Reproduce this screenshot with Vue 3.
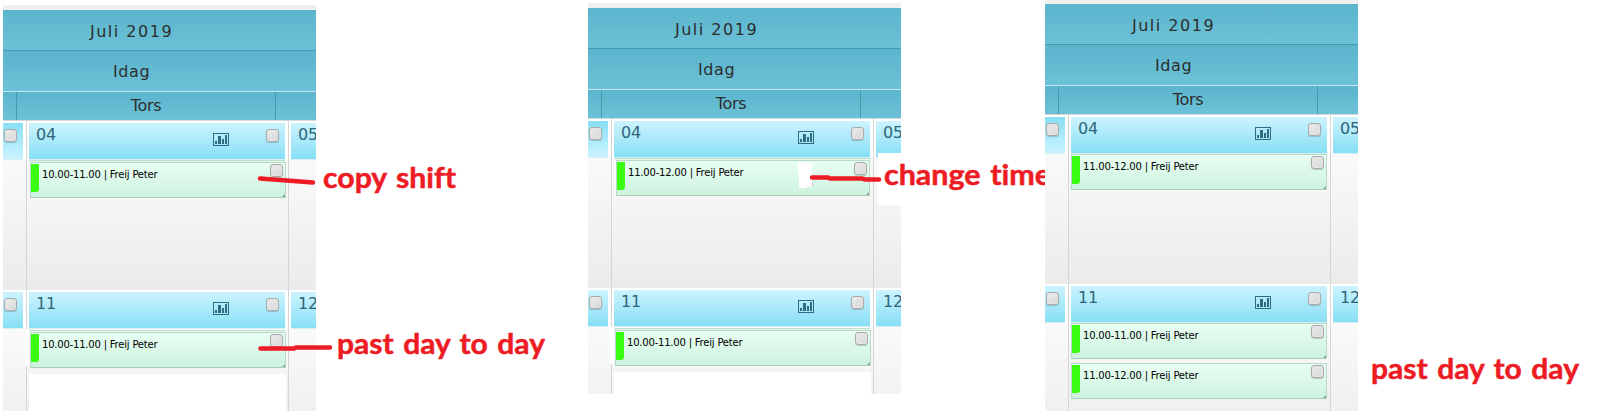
<script setup>
const panels = [
  {
    name: 'first',
    rows: [
      { days: ['', '04', '05'], offset: 'near', shifts: [{ time: '10.00-11.00', who: 'Freij Peter' }] },
      { days: ['', '11', '12'], offset: 'far', blank: true, shifts: [{ time: '10.00-11.00', who: 'Freij Peter' }] },
    ],
  },
  {
    name: 'second',
    rows: [
      { days: ['', '04', '05'], offset: 'inset', shifts: [{ time: '11.00-12.00', who: 'Freij Peter', erased: true }] },
      { days: ['', '11', '12'], offset: 'far', blank: true, shifts: [{ time: '10.00-11.00', who: 'Freij Peter' }] },
    ],
  },
  {
    name: 'third',
    rows: [
      { days: ['', '04', '05'], offset: 'flush', shifts: [{ time: '11.00-12.00', who: 'Freij Peter' }] },
      {
        days: ['', '11', '12'],
        offset: 'flush',
        shifts: [
          { time: '10.00-11.00', who: 'Freij Peter' },
          { time: '11.00-12.00', who: 'Freij Peter' },
        ],
      },
    ],
  },
]
</script>

<template>
  <main class="board">
    <section v-for="p in panels" :key="p.name" class="panel" :class="p.name">
      <header class="title month"><span>Juli 2019</span></header>
      <div class="title today"><span>Idag</span></div>
      <div class="weekdays"><i></i><span>Tors</span><i></i></div>
      <div v-for="(row, r) in p.rows" :key="r" class="week" :class="{ later: r > 0 }">
        <div v-for="(day, c) in row.days" :key="c" class="cell">
          <div class="frame">
            <div class="dayhead">
              <span v-if="day" class="num">{{ day }}</span>
              <svg v-if="c === 1" class="chart" width="16" height="13" viewBox="0 0 16 13" shape-rendering="crispEdges">
                <path d="M0 0h16v13H0zM1 1v11h14V1z" fill="#2f6c80" fill-rule="evenodd" />
                <path d="M2 8h2v3H2zM5 3h3v8H5zM9 6h2v5H9zM12 2h2v9h-2z" fill="#2f6c80" />
              </svg>
              <b v-if="c < 2" class="check"></b>
            </div>
          </div>
          <div class="body">
            <div v-if="c === 1" class="stack" :class="row.offset">
              <article v-for="(s, i) in row.shifts" :key="i" class="shift">
                <em></em>
                <span>{{ s.time }} | {{ s.who }}</span>
                <b class="check"></b>
                <svg class="corner" width="3" height="3" viewBox="0 0 3 3"><path d="M3 0v3H0z" fill="#85a596" /></svg>
                <svg v-if="s.erased" class="erased" width="15" height="26" viewBox="0 0 15 26" shape-rendering="crispEdges">
                  <path d="M0 0h9v1h5v23H9v2H1V13H0z" fill="#fff" /><path d="M14 21h1v3h-1z" fill="#e8a8e0" />
                </svg>
              </article>
            </div>
            <div v-if="c === 1 && row.blank" class="blank"></div>
          </div>
        </div>
      </div>
    </section>

    <svg class="notes" width="1599" height="411" viewBox="0 0 1599 411">
      <path d="M610 327h4v37h-4zM25 329h4v37h-4zM878 153h24v52h-24zM1353 348h6v53h-6z" fill="#fff" />
      <g class="strokes">
        <path d="M260 178.5L280 180L313 182.500" />
        <path d="M260.500 348.500H294L296 347.500H330" />
        <path d="M812 177.500H828L830 178.500H862L865 179.500H879" />
      </g>
      <text x="323" y="188" textLength="133" lengthAdjust="spacingAndGlyphs">copy shift</text>
      <text x="337" y="353.500" textLength="208" lengthAdjust="spacingAndGlyphs">past day to day</text>
      <text x="884" y="185" textLength="167" lengthAdjust="spacingAndGlyphs">change time</text>
      <text x="1371" y="379" textLength="208" lengthAdjust="spacingAndGlyphs">past day to day</text>
    </svg>
  </main>
</template>

<style>
body { background: #fff; overflow: hidden; }
</style>

<style scoped>
.board {
  position: relative;
  display: flex;
  align-items: flex-start;
  width: 1599px;
  height: 411px;
  overflow: hidden;
  background: #fff;
  font-family: "DejaVu Sans", sans-serif;
}
.panel {
  box-sizing: border-box;
  flex: none;
  width: 313px;
  border-top: 5px solid #f0f0f0;
  overflow: hidden;
}
.first { margin: 5px 0 0 3px; height: 406px; }
.second { margin: 3px 0 0 272px; height: 391px; }
.third { margin: -1px 0 0 144px; height: 412px; position: relative; z-index: 2; }
.title {
  box-sizing: border-box;
  height: 41px;
  background: linear-gradient(#5bb5cd, #6cc1d7);
  color: #2d2d2d;
  font-size: 16px;
  line-height: 20px;
}
.month { border-bottom: 1px solid #4499ae; padding: 12px 0 0 87px; letter-spacing: 1.5px; }
.today { border-bottom: 1px solid #c6e6ee; padding: 11px 0 0 110px; letter-spacing: .6px; }
.weekdays {
  display: grid;
  grid-template-columns: 13px 259px 41px;
  height: 28px;
  background: linear-gradient(#5bb5cd, #6cc1d7);
  color: #2d2d2d;
  font-size: 16px;
  line-height: 27px;
  text-align: center;
}
.weekdays span { letter-spacing: -.3px; }
.weekdays span, .weekdays i:last-child { border-left: 1px solid #4499ae; }
.week {
  display: grid;
  grid-template-columns: 23px 262px 28px;
  box-sizing: border-box;
  height: 169px;
  border-top: 1px solid #d4d9da;
}
.cell { min-width: 0; }
.cell + .cell { border-left: 1px solid #d5d5d5; }
.frame { box-sizing: border-box; height: 39px; padding: 2px 3px 1px 2px; background: #fff; }
.cell:first-child .frame { padding-left: 0; }
.cell:last-child .frame { padding-right: 0; }
.dayhead {
  display: flex;
  align-items: flex-start;
  height: 36px;
  border-bottom: 1px solid #d8edf4;
  background: linear-gradient(#ccf3ff, #88dff5);
}
.week:not(.later) .cell:first-child .dayhead { background: linear-gradient(#88dff5, #ccf3ff); }
.num {
  width: 177px;
  padding: 2px 0 0 7px;
  color: #2f6678;
  font-size: 16px;
  line-height: 20px;
  letter-spacing: -.3px;
}
.chart { flex: none; margin-top: 10px; }
.check {
  box-sizing: border-box;
  flex: none;
  width: 13px;
  height: 13px;
  border: 1px solid #aaa;
  border-radius: 3px;
  background: linear-gradient(135deg, #ececec, #d7d7d7);
  box-shadow: inset 0 0 0 1px #e5e5e5, 0 1px 1px rgba(0, 0, 0, .18);
}
.dayhead .check { margin: 6px 6px 0 auto; }
.body {
  display: flow-root;
  height: 130px;
  background: linear-gradient(#fafafa, #ebebeb);
}
.stack { display: grid; gap: 4px; position: relative; width: 256px; }
.flush { margin: 0 0 0 2px; }
.near { margin: 2px 0 0 3px; }
.far { margin: 3px 0 0 3px; }
.inset { margin: 2px 0 0 4px; width: 254px; }
.near::before, .far::before, .inset::before {
  content: "";
  position: absolute;
  top: -2px;
  left: -1px;
  width: 256px;
  height: 2px;
  box-sizing: border-box;
  border-top: 1px solid #bfdfcd;
  background: #e8f7ee;
}
.shift {
  position: relative;
  display: flex;
  align-items: flex-start;
  box-sizing: border-box;
  height: 36px;
  border: 1px solid #b7dac7;
  border-bottom-color: #aacfb9;
  border-radius: 1px;
  background: linear-gradient(#e9fff3, #cdf2df);
}
.shift em { width: 8px; height: 28px; margin-top: 1px; background: #39fd12; border-radius: 0 0 3px 0; }
.shift span {
  padding: 5px 0 0 3px;
  color: #000;
  font-size: 10px;
  line-height: 14px;
  letter-spacing: -.2px;
  white-space: nowrap;
}
.shift .check { margin: 1px 2px 0 auto; }
.corner { position: absolute; right: 0; bottom: 0; }
.erased { position: absolute; left: 181px; top: 1px; }
.blank { width: 257px; height: 60px; margin: 6px 0 0 2px; background: #fff; }
.notes { position: absolute; left: 0; top: 0; z-index: 1; }
.notes text {
  fill: #ed1c24;
  stroke: #ed1c24;
  stroke-width: .5px;
  font: bold 28.5px Lato, sans-serif;
  font-variant-ligatures: none;
  word-spacing: 2px;
}
.strokes path { fill: none; stroke: #ed1c24; stroke-width: 4.5; stroke-linecap: round; }
</style>
